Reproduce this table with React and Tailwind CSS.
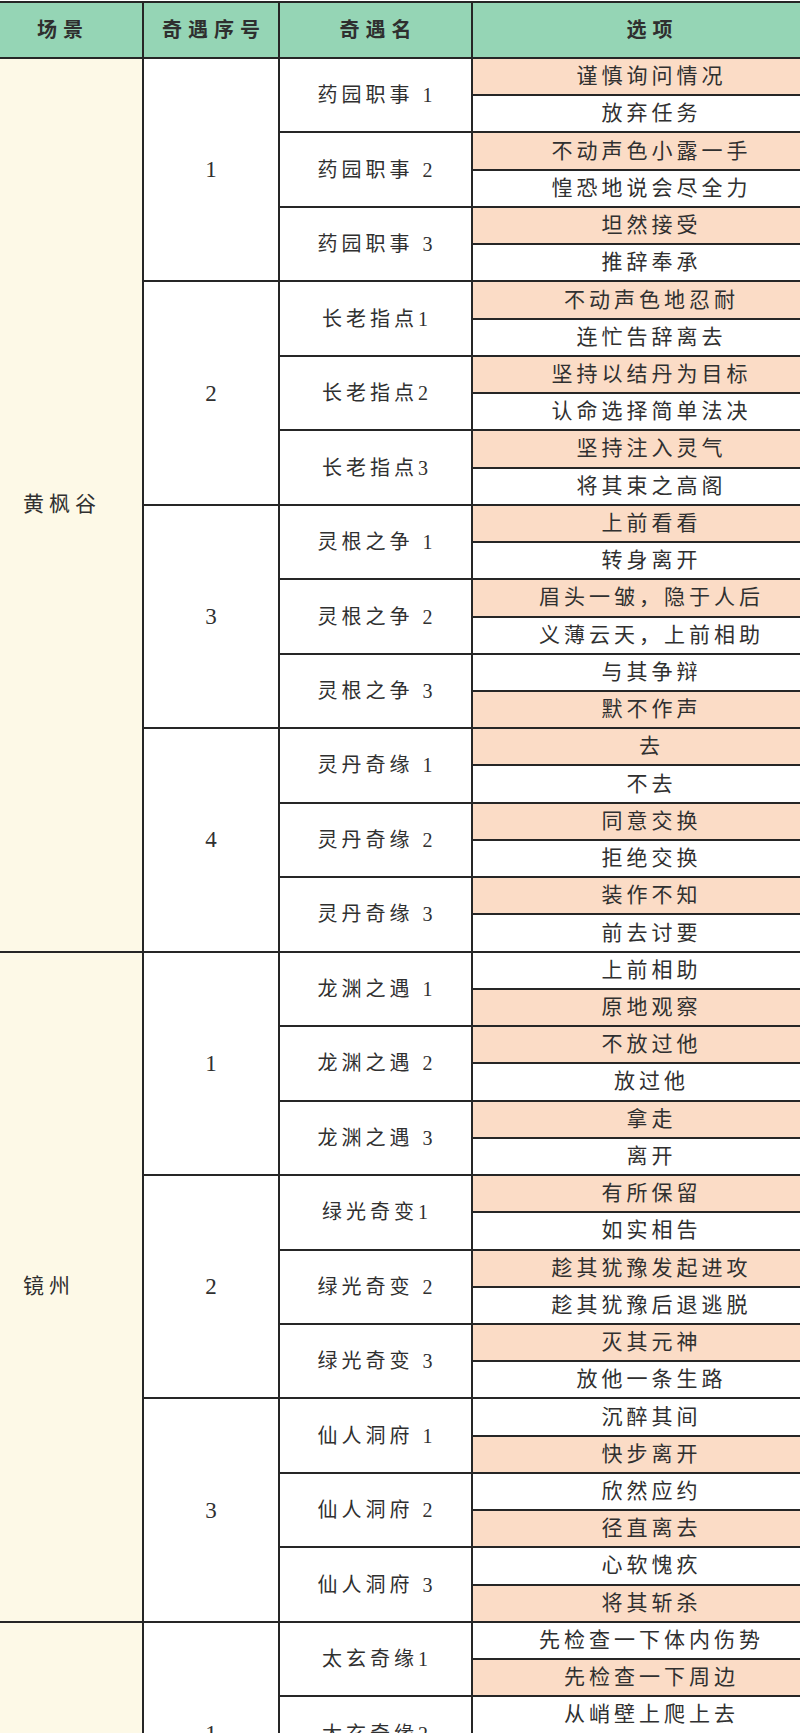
import React from "react";

const O = "o";
const W = "w";

const data = [
  {
    scene: "黄枫谷",
    groups: [
      {
        no: "1",
        items: [
          { name: "药园职事 1", opts: [["谨慎询问情况", O], ["放弃任务", W]] },
          { name: "药园职事 2", opts: [["不动声色小露一手", O], ["惶恐地说会尽全力", W]] },
          { name: "药园职事 3", opts: [["坦然接受", O], ["推辞奉承", W]] },
        ],
      },
      {
        no: "2",
        items: [
          { name: "长老指点1", opts: [["不动声色地忍耐", O], ["连忙告辞离去", W]] },
          { name: "长老指点2", opts: [["坚持以结丹为目标", O], ["认命选择简单法决", W]] },
          { name: "长老指点3", opts: [["坚持注入灵气", O], ["将其束之高阁", W]] },
        ],
      },
      {
        no: "3",
        items: [
          { name: "灵根之争 1", opts: [["上前看看", O], ["转身离开", W]] },
          { name: "灵根之争 2", opts: [["眉头一皱，隐于人后", O], ["义薄云天，上前相助", W]] },
          { name: "灵根之争 3", opts: [["与其争辩", W], ["默不作声", O]] },
        ],
      },
      {
        no: "4",
        items: [
          { name: "灵丹奇缘 1", opts: [["去", O], ["不去", W]] },
          { name: "灵丹奇缘 2", opts: [["同意交换", O], ["拒绝交换", W]] },
          { name: "灵丹奇缘 3", opts: [["装作不知", O], ["前去讨要", W]] },
        ],
      },
    ],
  },
  {
    scene: "镜州",
    groups: [
      {
        no: "1",
        items: [
          { name: "龙渊之遇 1", opts: [["上前相助", W], ["原地观察", O]] },
          { name: "龙渊之遇 2", opts: [["不放过他", O], ["放过他", W]] },
          { name: "龙渊之遇 3", opts: [["拿走", O], ["离开", W]] },
        ],
      },
      {
        no: "2",
        items: [
          { name: "绿光奇变1", opts: [["有所保留", O], ["如实相告", W]] },
          { name: "绿光奇变 2", opts: [["趁其犹豫发起进攻", O], ["趁其犹豫后退逃脱", W]] },
          { name: "绿光奇变 3", opts: [["灭其元神", O], ["放他一条生路", W]] },
        ],
      },
      {
        no: "3",
        items: [
          { name: "仙人洞府 1", opts: [["沉醉其间", W], ["快步离开", O]] },
          { name: "仙人洞府 2", opts: [["欣然应约", W], ["径直离去", O]] },
          { name: "仙人洞府 3", opts: [["心软愧疚", W], ["将其斩杀", O]] },
        ],
      },
    ],
  },
  {
    scene: "",
    groups: [
      {
        no: "1",
        items: [
          { name: "太玄奇缘1", opts: [["先检查一下体内伤势", W], ["先检查一下周边", O]] },
          { name: "太玄奇缘2", opts: [["从峭壁上爬上去", W], ["原路返回", O]] },
          { name: "太玄奇缘3", opts: [["继续前进", W], ["原地休息", O]] },
        ],
      },
    ],
  },
];

const font = { fontFamily: '"Liberation Serif", "Noto Sans CJK SC", serif' };

function Option({ text, kind }) {
  return (
    <div
      className={
        "h-[37.24px] border-t-2 border-[#262626] flex items-center justify-center pl-[30px] text-[21px] tracking-[4px] text-[#303030] leading-none " +
        (kind === "o" ? "bg-[#fbdcc6]" : "bg-white")
      }
    >
      {text}
    </div>
  );
}

function Encounter({ item }) {
  return (
    <div className="flex">
      <div className="w-[193px] shrink-0 border-t-2 border-r-2 border-[#262626] bg-white flex items-center justify-center pl-[3px] text-[20px] tracking-[4px] text-[#303030] leading-none">
        {item.name}
      </div>
      <div className="flex-1 flex flex-col">
        {item.opts.map((o, i) => (
          <Option key={i} text={o[0]} kind={o[1]} />
        ))}
      </div>
    </div>
  );
}

function Group({ group }) {
  return (
    <div className="flex">
      <div className="w-[136px] shrink-0 border-t-2 border-r-2 border-[#262626] bg-white flex items-center justify-center text-[23px] text-[#303030] leading-none">
        {group.no}
      </div>
      <div className="flex-1 flex flex-col">
        {group.items.map((it, i) => (
          <Encounter key={i} item={it} />
        ))}
      </div>
    </div>
  );
}

function Section({ section }) {
  return (
    <div className="flex">
      <div className="w-[144px] shrink-0 border-t-2 border-r-2 border-[#262626] bg-[#fdf9e7] flex items-center pl-[23px] text-[21px] tracking-[5px] text-[#303030] leading-none">
        {section.scene}
      </div>
      <div className="flex-1 flex flex-col">
        {section.groups.map((g, i) => (
          <Group key={i} group={g} />
        ))}
      </div>
    </div>
  );
}

export default function App() {
  return (
    <div className="w-[800px] h-[1733px] overflow-hidden bg-white" style={font}>
      <div className="mt-[1px] h-[56px] flex border-t-2 border-[#262626] bg-[#95d5b5] text-[20px] font-bold tracking-[6px] text-[#2f2f2f] leading-none">
        <div className="w-[144px] shrink-0 border-r-2 border-[#262626] flex items-center justify-center pr-[16px]">
          场景
        </div>
        <div className="w-[136px] shrink-0 border-r-2 border-[#262626] flex items-center justify-center pl-[6px]">
          奇遇序号
        </div>
        <div className="w-[193px] shrink-0 border-r-2 border-[#262626] flex items-center justify-center pl-[6px]">
          奇遇名
        </div>
        <div className="flex-1 flex items-center justify-center pl-[32px]">选项</div>
      </div>
      {data.map((s, i) => (
        <Section key={i} section={s} />
      ))}
    </div>
  );
}
